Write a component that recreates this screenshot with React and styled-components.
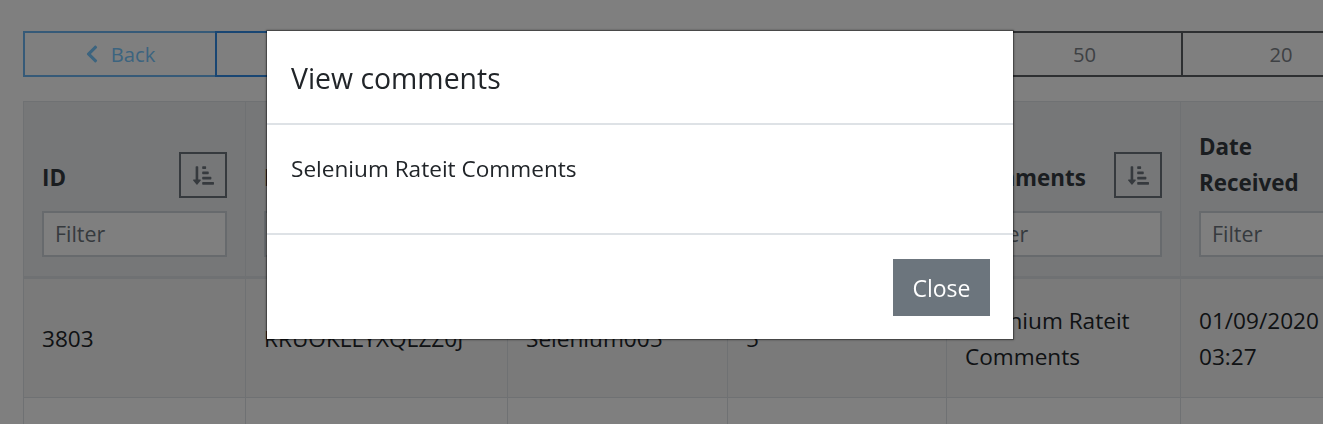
import React from "react";
import styled, { createGlobalStyle } from "styled-components";
import { FaChevronLeft, FaSortAmountDownAlt } from "react-icons/fa";

const GlobalStyle = createGlobalStyle`
  html, body {
    margin: 0;
    height: 100%;
    overflow: hidden;
    background: #fff;
  }
  body {
    font-family: "Open Sans", "Noto Sans", sans-serif;
    font-size: 22.6px;
    line-height: 36px;
    color: #212529;
  }
`;

const columns = [
  { title: "ID", width: 222, value: "3803" },
  { title: "Reference", width: 262, value: "RRUOKLLYXQLZZ0J" },
  { title: "Reviewer", width: 220, value: "Selenium005" },
  { title: "Rating", width: 219, value: "5" },
  { title: "Comments", width: 234, value: "Selenium Rateit Comments" },
  { title: "Date Received", width: 200, value: "01/09/2020 03:27", noSort: true },
];

const Page = styled.div`
  width: 1323px;
  height: 424px;
  padding: 31px 0 0 23px;
  box-sizing: border-box;
  overflow: hidden;
`;

const ButtonBar = styled.div`
  display: flex;
  width: 1400px;
  height: 46px;
  margin-bottom: 24px;
`;

const BarButton = styled.button`
  flex: 0 0 ${({ $width }) => $width}px;
  display: flex;
  align-items: center;
  justify-content: center;
  gap: 9px;
  margin-left: -2px;
  padding: 0 ${({ $tone }) => ($tone === "back" ? 3 : 0)}px 0 0;
  background: transparent;
  border: 2px solid ${({ $tone }) => ($tone === "back" ? "#6cb4f0" : $tone === "active" ? "#328ce6" : "#5a5e62")};
  color: ${({ $tone }) => ($tone === "back" ? "#78c8ff" : "#7c8288")};
  font: inherit;
  font-size: 20.2px;
  position: relative;
  z-index: ${({ $tone }) => ($tone === "active" ? 1 : 0)};

  &:first-child {
    margin-left: 0;
  }

  svg {
    font-size: 20px;
  }
`;

const Table = styled.table`
  border-collapse: collapse;
  table-layout: fixed;
  width: 1357px;
`;

const HeadCell = styled.th`
  width: ${({ $width }) => $width}px;
  height: 176px;
  box-sizing: border-box;
  padding: 24px 18px 19px;
  background: #eceef0;
  border: 1px solid #dee2e6;
  border-bottom-width: 3px;
  text-align: left;
  vertical-align: bottom;
  font-weight: 700;
  font-size: 22.4px;
  color: #343a40;
`;

const HeadRow = styled.div`
  display: flex;
  align-items: center;
  justify-content: space-between;
  gap: 8px;
  min-height: 46px;
  margin-bottom: 13px;
`;

const HeadTitle = styled.span`
  max-width: 130px;
  padding-top: ${({ $wrapped }) => ($wrapped ? 0 : 6)}px;
  margin-bottom: ${({ $wrapped }) => ($wrapped ? -3 : 0)}px;
`;

const SortButton = styled.button`
  flex: none;
  display: flex;
  align-items: center;
  justify-content: center;
  width: 48px;
  height: 46px;
  padding: 0;
  background: transparent;
  border: 2px solid #6c757d;
  color: #6c757d;

  svg {
    font-size: 21px;
  }
`;

const FilterInput = styled.input`
  display: block;
  width: 100%;
  height: 46px;
  box-sizing: border-box;
  padding: 0 11px 2px;
  background: #fff;
  border: 2px solid #ced4da;
  color: #495057;
  font: inherit;
  font-size: 21.4px;
  font-weight: 400;

  &::placeholder {
    color: #6c757d;
    opacity: 1;
  }
`;

const BodyCell = styled.td`
  height: ${({ $empty }) => ($empty ? 60 : 120)}px;
  box-sizing: border-box;
  padding: 2px 18px 0;
  background: ${({ $empty }) => ($empty ? "#fff" : "#f4f4f4")};
  border: 1px solid #dee2e6;
  vertical-align: middle;
`;

const Backdrop = styled.div`
  position: fixed;
  inset: 0;
  z-index: 10;
  background: rgba(0, 0, 0, 0.5);
`;

const Modal = styled.div`
  position: fixed;
  z-index: 11;
  left: 266px;
  top: 30px;
  width: 748px;
  height: 310px;
  box-sizing: border-box;
  display: flex;
  flex-direction: column;
  background: #fff;
  background-clip: padding-box;
  border: 1px solid rgba(0, 0, 0, 0.25);
  box-shadow: 0 0 2px rgba(0, 0, 0, 0.35);
`;

const ModalHeader = styled.div`
  height: 94px;
  box-sizing: border-box;
  display: flex;
  align-items: center;
  padding: 2px 24px 0;
  border-bottom: 2px solid #dee2e6;
  font-size: 28.4px;
`;

const ModalBody = styled.div`
  height: 110px;
  box-sizing: border-box;
  padding: 26px 24px 0;
  border-bottom: 2px solid #dee2e6;
`;

const ModalFooter = styled.div`
  flex: 1;
  display: flex;
  align-items: flex-start;
  justify-content: flex-end;
  padding: 24px 23px 0 0;
`;

const CloseButton = styled.button`
  width: 97px;
  height: 57px;
  padding: 0;
  background: #6c757d;
  border: 0;
  color: #fff;
  font: inherit;
  font-size: 23px;
`;

export default function App() {
  return (
    <>
      <GlobalStyle />
      <Page>
        <ButtonBar>
          <BarButton $width={194} $tone="back">
            <FaChevronLeft /> Back
          </BarButton>
          <BarButton $width={195} $tone="active">All</BarButton>
          <BarButton $width={195}>1000</BarButton>
          <BarButton $width={195}>500</BarButton>
          <BarButton $width={194}>100</BarButton>
          <BarButton $width={197}>50</BarButton>
          <BarButton $width={200}>20</BarButton>
        </ButtonBar>
        <Table>
          <thead>
            <tr>
              {columns.map((col) => (
                <HeadCell key={col.title} $width={col.width}>
                  <HeadRow>
                    <HeadTitle $wrapped={col.noSort}>{col.title}</HeadTitle>
                    {!col.noSort && (
                      <SortButton>
                        <FaSortAmountDownAlt />
                      </SortButton>
                    )}
                  </HeadRow>
                  <FilterInput placeholder="Filter" />
                </HeadCell>
              ))}
            </tr>
          </thead>
          <tbody>
            <tr>
              {columns.map((col) => (
                <BodyCell key={col.title}>{col.value}</BodyCell>
              ))}
            </tr>
            <tr>
              {columns.map((col) => (
                <BodyCell key={col.title} $empty />
              ))}
            </tr>
          </tbody>
        </Table>
      </Page>
      <Backdrop />
      <Modal>
        <ModalHeader>View comments</ModalHeader>
        <ModalBody>Selenium Rateit Comments</ModalBody>
        <ModalFooter>
          <CloseButton>Close</CloseButton>
        </ModalFooter>
      </Modal>
    </>
  );
}
